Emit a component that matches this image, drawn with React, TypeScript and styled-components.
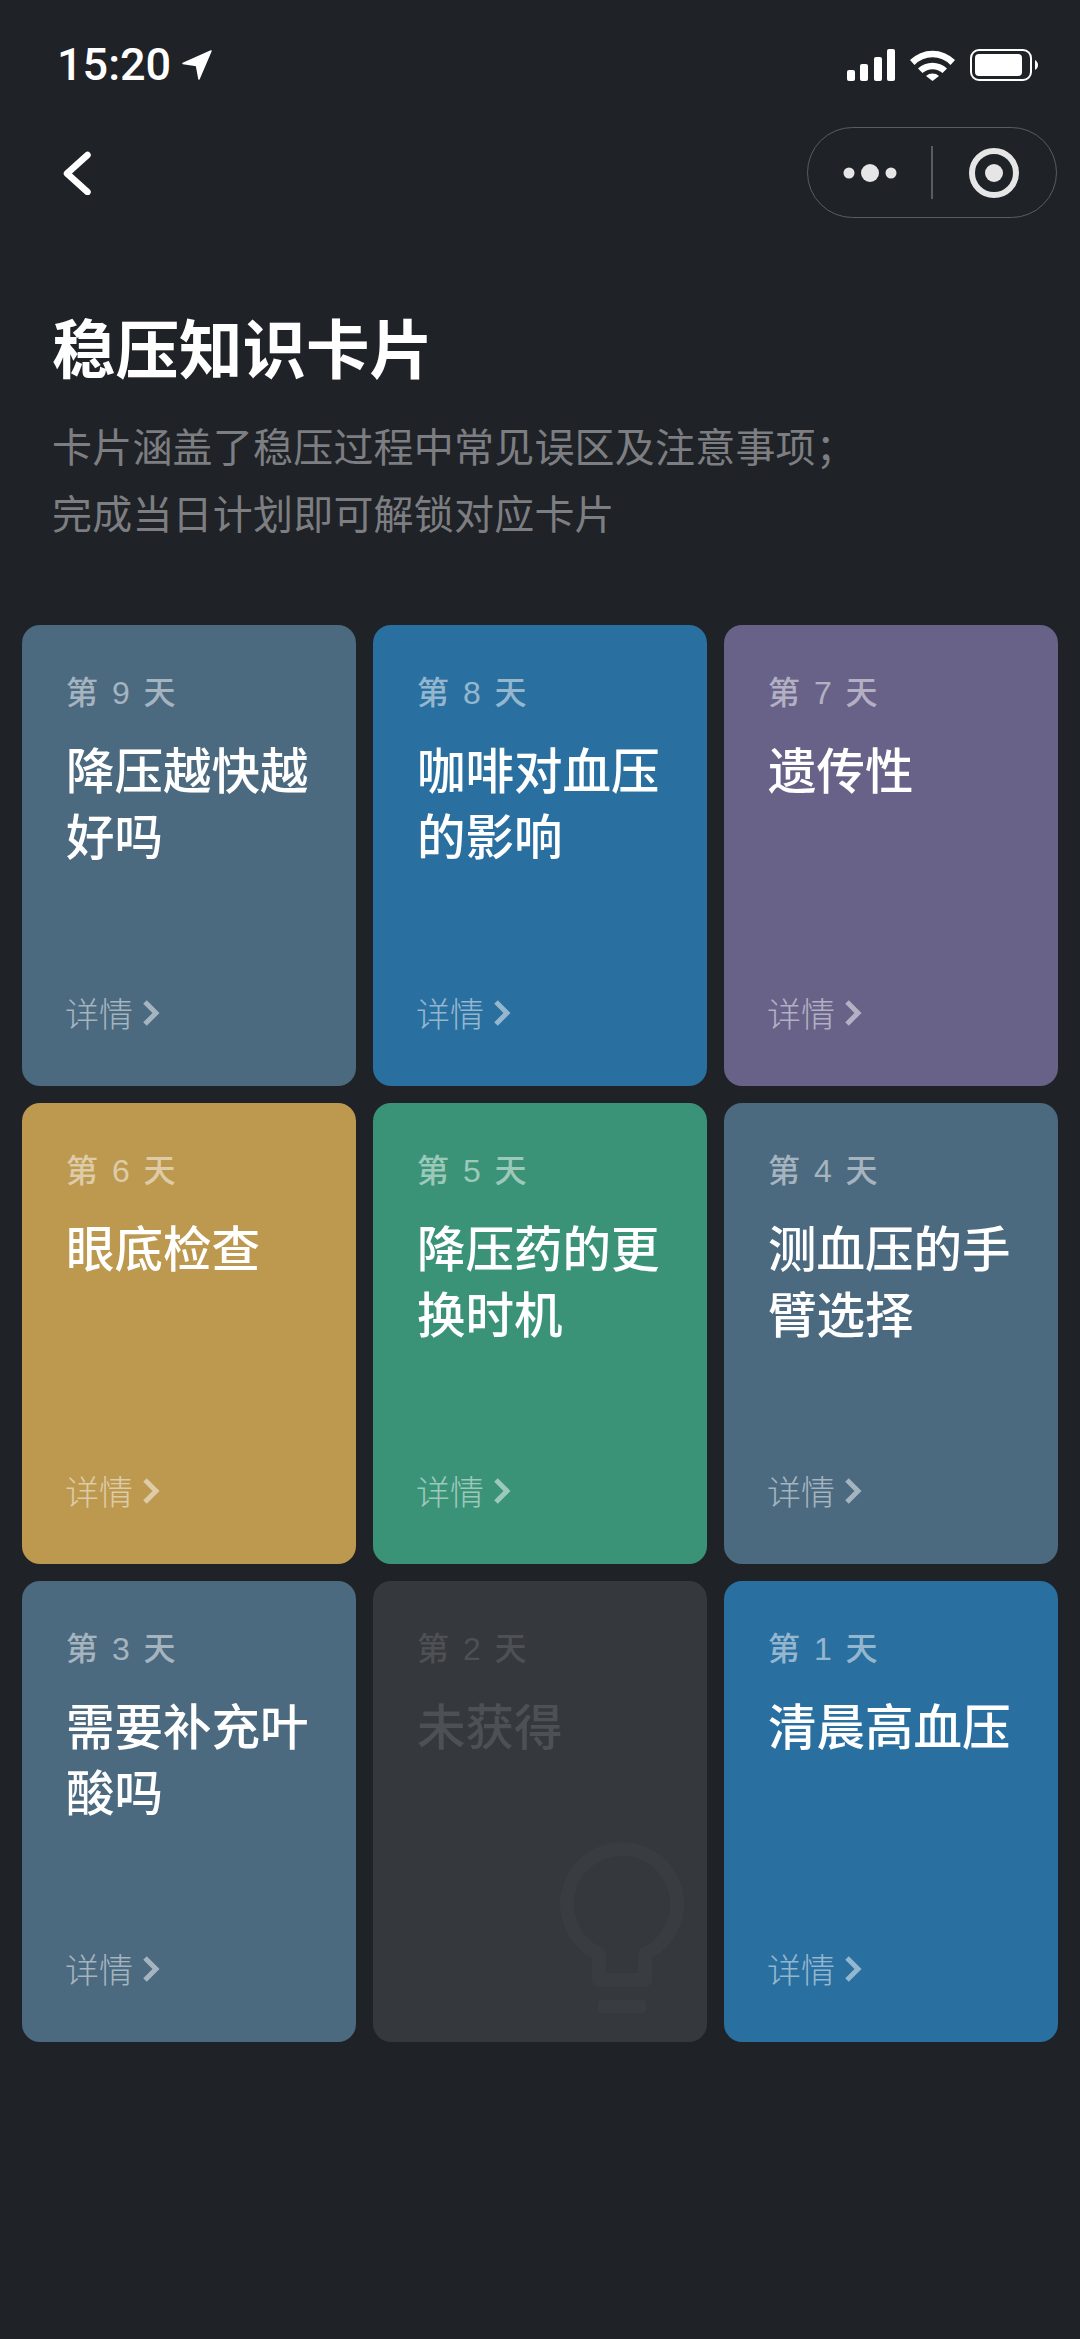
import styled, { createGlobalStyle } from "styled-components";

const GlobalStyle = createGlobalStyle`
  html, body {
    margin: 0;
    padding: 0;
    background-color: #1f2227;
  }
  * {
    box-sizing: border-box;
  }
`;

const Colors = {
  slate: "#4b697f",
  blue: "#296f9f",
  purple: "#686288",
  gold: "#bc994f",
  green: "#3b9377",
  locked: "#35383d",
};

const Page = styled.div`
  width: 1080px;
  height: 2339px;
  background-color: #1f2227;
  font-family: "Noto Sans CJK SC", "Liberation Sans", sans-serif;
  overflow: hidden;
`;

const StatusBar = styled.div`
  height: 127px;
  padding: 40px 42px 0 57px;
  display: flex;
  justify-content: space-between;
  align-items: flex-start;
`;

const TimeBox = styled.div`
  display: flex;
  align-items: center;
  gap: 11px;
  height: 50px;
`;

const Time = styled.span`
  font-family: Roboto, "Liberation Sans", sans-serif;
  font-size: 45px;
  font-weight: 500;
  color: #ffffff;
  line-height: 50px;
`;

const StatusIcons = styled.div`
  display: flex;
  align-items: center;
  gap: 15px;
  height: 50px;
`;

const NavBar = styled.div`
  height: 91px;
  padding: 0 23px 0 63px;
  display: flex;
  justify-content: space-between;
  align-items: center;
`;

const Capsule = styled.div`
  width: 250px;
  height: 91px;
  border: 1.5px solid #5a5c60;
  border-radius: 46px;
  display: grid;
  grid-template-columns: 1fr 1.5px 1fr;
  align-items: center;
  justify-items: center;
`;

const CapsuleDivider = styled.div`
  width: 1.5px;
  height: 53px;
  background-color: #5a5c60;
`;

const Header = styled.div`
  padding: 96px 52px 0;
`;

const Title = styled.h1`
  margin: 0;
  font-size: 63.5px;
  font-weight: 700;
  line-height: 62px;
  color: #ffffff;
`;

const Desc = styled.p`
  margin: 36px 0 0;
  font-size: 40px;
  font-weight: 400;
  letter-spacing: 0.2px;
  line-height: 67px;
  color: #7d7e81;
`;

const CardGrid = styled.div`
  margin-top: 79px;
  padding: 0 22px;
  display: grid;
  grid-template-columns: repeat(3, 334px);
  grid-auto-rows: 461px;
  gap: 17px;
`;

const Card = styled.div<{ $bg: string }>`
  position: relative;
  background-color: ${(p) => p.$bg};
  border-radius: 18px;
  padding: 45px 30px 50px 44px;
  display: flex;
  flex-direction: column;
`;

const DayLabel = styled.div<{ $locked?: boolean }>`
  font-family: "Liberation Sans", "Noto Sans CJK SC", sans-serif;
  font-size: 32px;
  font-weight: 500;
  line-height: 46px;
  word-spacing: 5px;
  color: ${(p) => (p.$locked ? "#4d5054" : "rgba(255, 255, 255, 0.5)")};
`;

const CardTitle = styled.div<{ $locked?: boolean }>`
  margin-top: 19px;
  font-size: 48.5px;
  font-weight: 500;
  line-height: 66px;
  color: ${(p) => (p.$locked ? "#4d5054" : "#ffffff")};
`;

const DetailLink = styled.div`
  margin-top: auto;
  margin-left: -1px;
  display: flex;
  align-items: center;
  gap: 9px;
  font-size: 34px;
  font-weight: 300;
  line-height: 46px;
  color: rgba(255, 255, 255, 0.5);
`;

const BulbIcon = styled.svg`
  position: absolute;
  right: 23px;
  bottom: 29px;
`;

type CardData = {
  day: string;
  title: string;
  color: string;
  locked?: boolean;
};

const cards: CardData[] = [
  { day: "第 9 天", title: "降压越快越好吗", color: Colors.slate },
  { day: "第 8 天", title: "咖啡对血压的影响", color: Colors.blue },
  { day: "第 7 天", title: "遗传性", color: Colors.purple },
  { day: "第 6 天", title: "眼底检查", color: Colors.gold },
  { day: "第 5 天", title: "降压药的更换时机", color: Colors.green },
  { day: "第 4 天", title: "测血压的手臂选择", color: Colors.slate },
  { day: "第 3 天", title: "需要补充叶酸吗", color: Colors.slate },
  { day: "第 2 天", title: "未获得", color: Colors.locked, locked: true },
  { day: "第 1 天", title: "清晨高血压", color: Colors.blue },
];

function LocationArrow() {
  return (
    <svg width="30" height="30" viewBox="0 0 30 30">
      <path d="M29 1 L1 13.5 L14.5 15.5 L17 29 Z" fill="#ffffff" stroke="#ffffff" strokeWidth="1.5" strokeLinejoin="round" />
    </svg>
  );
}

function SignalIcon() {
  return (
    <svg width="48" height="32" viewBox="0 0 48 32">
      <rect x="0" y="21" width="8" height="11" rx="2" fill="#ffffff" />
      <rect x="13" y="15" width="8" height="17" rx="2" fill="#ffffff" />
      <rect x="27" y="8" width="8" height="24" rx="2" fill="#ffffff" />
      <rect x="40" y="0" width="8" height="32" rx="2" fill="#ffffff" />
    </svg>
  );
}

function WifiIcon() {
  return (
    <svg width="45" height="32" viewBox="0 0 45 32">
      <path d="M0 11 A32 32 0 0 1 45 11 L40.5 16 A25 25 0 0 0 4.5 16 Z" fill="#ffffff" />
      <path d="M8 19.5 A21 21 0 0 1 37 19.5 L32.5 24 A15 15 0 0 0 12.5 24 Z" fill="#ffffff" />
      <path d="M16 27 A10 10 0 0 1 29 27 L22.5 32 Z" fill="#ffffff" />
    </svg>
  );
}

function BatteryIcon() {
  return (
    <svg width="68" height="32" viewBox="0 0 68 32">
      <rect x="1" y="1" width="60" height="30" rx="8" fill="none" stroke="#ffffff" strokeWidth="2" />
      <rect x="5" y="5" width="47" height="22" rx="4" fill="#ffffff" />
      <path d="M65 11 C67 12 68 14 68 16 C68 18 67 20 65 21 Z" fill="#ffffff" />
    </svg>
  );
}

function BackIcon() {
  return (
    <svg width="28" height="44" viewBox="0 0 28 44">
      <path d="M24.5 4 L4 22.5 L24.5 41" fill="none" stroke="#ffffff" strokeWidth="6.5" strokeLinecap="round" strokeLinejoin="round" />
    </svg>
  );
}

function DotsIcon() {
  return (
    <svg width="54" height="20" viewBox="0 0 54 20">
      <circle cx="6" cy="10" r="5.5" fill="#e6e6e6" />
      <circle cx="27" cy="10" r="9" fill="#e6e6e6" />
      <circle cx="48" cy="10" r="5.5" fill="#e6e6e6" />
    </svg>
  );
}

function RecordIcon() {
  return (
    <svg width="50" height="50" viewBox="0 0 50 50">
      <circle cx="25" cy="25" r="22" fill="none" stroke="#e6e6e6" strokeWidth="6" />
      <circle cx="25" cy="25" r="9" fill="#e6e6e6" />
    </svg>
  );
}

function Chevron() {
  return (
    <svg width="18" height="28" viewBox="0 0 18 28">
      <path d="M3 3 L14 14 L3 25" fill="none" stroke="rgba(255,255,255,0.5)" strokeWidth="5" />
    </svg>
  );
}

function Bulb() {
  return (
    <BulbIcon width="124" height="171" viewBox="0 0 124 171">
      <path d="M39 138 V112 A55 55 0 1 1 85 112 V138 Z" fill="none" stroke="#393c41" strokeWidth="14" strokeLinejoin="round" />
      <rect x="38" y="158" width="48" height="13" rx="3" fill="#393c41" />
    </BulbIcon>
  );
}

export default function App() {
  return (
    <Page>
      <GlobalStyle />
      <StatusBar>
        <TimeBox>
          <Time>15:20</Time>
          <LocationArrow />
        </TimeBox>
        <StatusIcons>
          <SignalIcon />
          <WifiIcon />
          <BatteryIcon />
        </StatusIcons>
      </StatusBar>
      <NavBar>
        <BackIcon />
        <Capsule>
          <DotsIcon />
          <CapsuleDivider />
          <RecordIcon />
        </Capsule>
      </NavBar>
      <Header>
        <Title>稳压知识卡片</Title>
        <Desc>
          卡片涵盖了稳压过程中常见误区及注意事项；
          <br />
          完成当日计划即可解锁对应卡片
        </Desc>
      </Header>
      <CardGrid>
        {cards.map((card) => (
          <Card key={card.day} $bg={card.color}>
            <DayLabel $locked={card.locked}>{card.day}</DayLabel>
            <CardTitle $locked={card.locked}>{card.title}</CardTitle>
            {card.locked ? (
              <Bulb />
            ) : (
              <DetailLink>
                详情
                <Chevron />
              </DetailLink>
            )}
          </Card>
        ))}
      </CardGrid>
    </Page>
  );
}
